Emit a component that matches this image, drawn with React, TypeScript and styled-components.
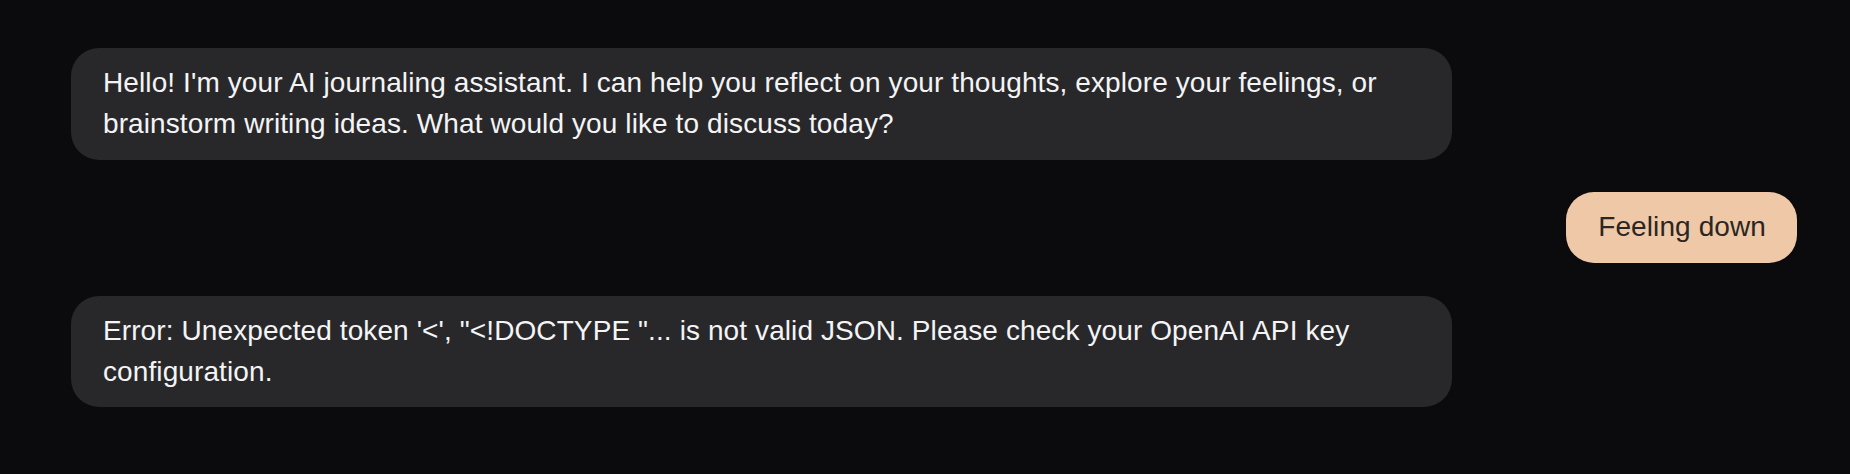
import React from "react";
import styled, { createGlobalStyle } from "styled-components";

const GlobalStyle = createGlobalStyle`
  html, body {
    margin: 0;
    padding: 0;
    background: #0b0b0d;
  }
  body {
    font-family: "Liberation Sans", Arial, Helvetica, sans-serif;
  }
`;

const Page = styled.div`
  min-height: 474px;
  background: #0b0b0d;
  box-sizing: border-box;
  padding: 48px 53px 48px 71px;
`;

const Thread = styled.div`
  display: flex;
  flex-direction: column;
  gap: 32.7px;
`;

const Row = styled.div<{ $mine?: boolean }>`
  display: flex;
  justify-content: ${(p) => (p.$mine ? "flex-end" : "flex-start")};
`;

const Bubble = styled.div<{ $mine?: boolean }>`
  max-width: 80%;
  box-sizing: border-box;
  padding: 15.2px 31px 15.2px 32px;
  border-radius: 28px;
  font-size: 28px;
  line-height: 40.6px;
  letter-spacing: 0.1px;
  background: ${(p) => (p.$mine ? "#efc8a8" : "#28282b")};
  color: ${(p) => (p.$mine ? "#2b2622" : "#f4f4f5")};
`;

const messages = [
  {
    mine: false,
    text:
      "Hello! I'm your AI journaling assistant. I can help you reflect on your thoughts, explore your feelings, or brainstorm writing ideas. What would you like to discuss today?",
  },
  { mine: true, text: "Feeling down" },
  {
    mine: false,
    text:
      "Error: Unexpected token '<', \"<!DOCTYPE \"... is not valid JSON. Please check your OpenAI API key configuration.",
  },
];

export default function App() {
  return (
    <>
      <GlobalStyle />
      <Page>
        <Thread>
          {messages.map((m, i) => (
            <Row key={i} $mine={m.mine}>
              <Bubble $mine={m.mine}>{m.text}</Bubble>
            </Row>
          ))}
        </Thread>
      </Page>
    </>
  );
}
